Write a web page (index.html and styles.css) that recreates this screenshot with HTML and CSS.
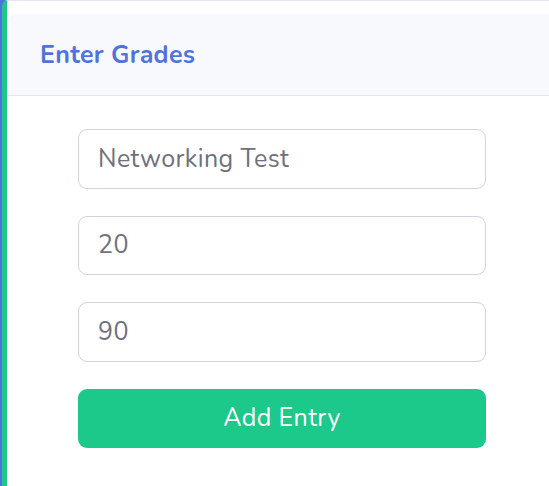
FILE: index.html
```html
<!DOCTYPE html>
<html>
<head>
<meta charset="utf-8">
<link rel="stylesheet" href="styles.css">
</head>
<body>
<div class="card">
  <div class="card-header">
    <h6 class="title">Enter Grades</h6>
  </div>
  <div class="card-body">
    <form class="form">
      <input class="field" type="text" value="Networking Test">
      <input class="field" type="text" value="20">
      <input class="field" type="text" value="90">
      <button class="btn" type="button">Add Entry</button>
    </form>
  </div>
</div>
</body>
</html>
```
FILE: styles.css
```css
html, body {
  margin: 0;
  padding: 0;
  height: 100%;
}
body {
  background: #4e73df;
  font-family: "Nunito", "Lato", "Noto Sans", sans-serif;
  overflow: hidden;
}
.card {
  margin-left: 2px;
  height: 100%;
  box-sizing: border-box;
  background: #fff;
  border-left: 5px solid #1cc88a;
  border-top: 1px solid #e3e6f0;
  border-top-left-radius: 6px;
  padding: 13px 0 0 1px;
}
.card-header {
  height: 82px;
  box-sizing: border-box;
  background: #f8f9fc;
  border-bottom: 1px solid #e3e6f0;
  border-top-left-radius: 6px;
  display: flex;
  align-items: center;
  padding-left: 32px;
}
.title {
  margin: 0;
  font-size: 25px;
  letter-spacing: 0.3px;
  font-weight: 700;
  color: #4e73df;
}
.card-body {
  padding: 33px 0 0 70px;
}
.form {
  width: 408px;
  display: flex;
  flex-direction: column;
  gap: 27px;
}
.field {
  height: 59.5px;
  box-sizing: border-box;
  border: 1px solid #d1d3e2;
  border-radius: 9px;
  padding: 0 19px;
  font-family: inherit;
  font-size: 25px;
  letter-spacing: 0.4px;
  color: #6e707e;
  background: #fff;
  outline: none;
}
.btn {
  height: 59.5px;
  border: 0;
  border-radius: 9px;
  background: #1cc88a;
  color: #fff;
  font-family: inherit;
  font-size: 25px;
  letter-spacing: 0.4px;
}
```
